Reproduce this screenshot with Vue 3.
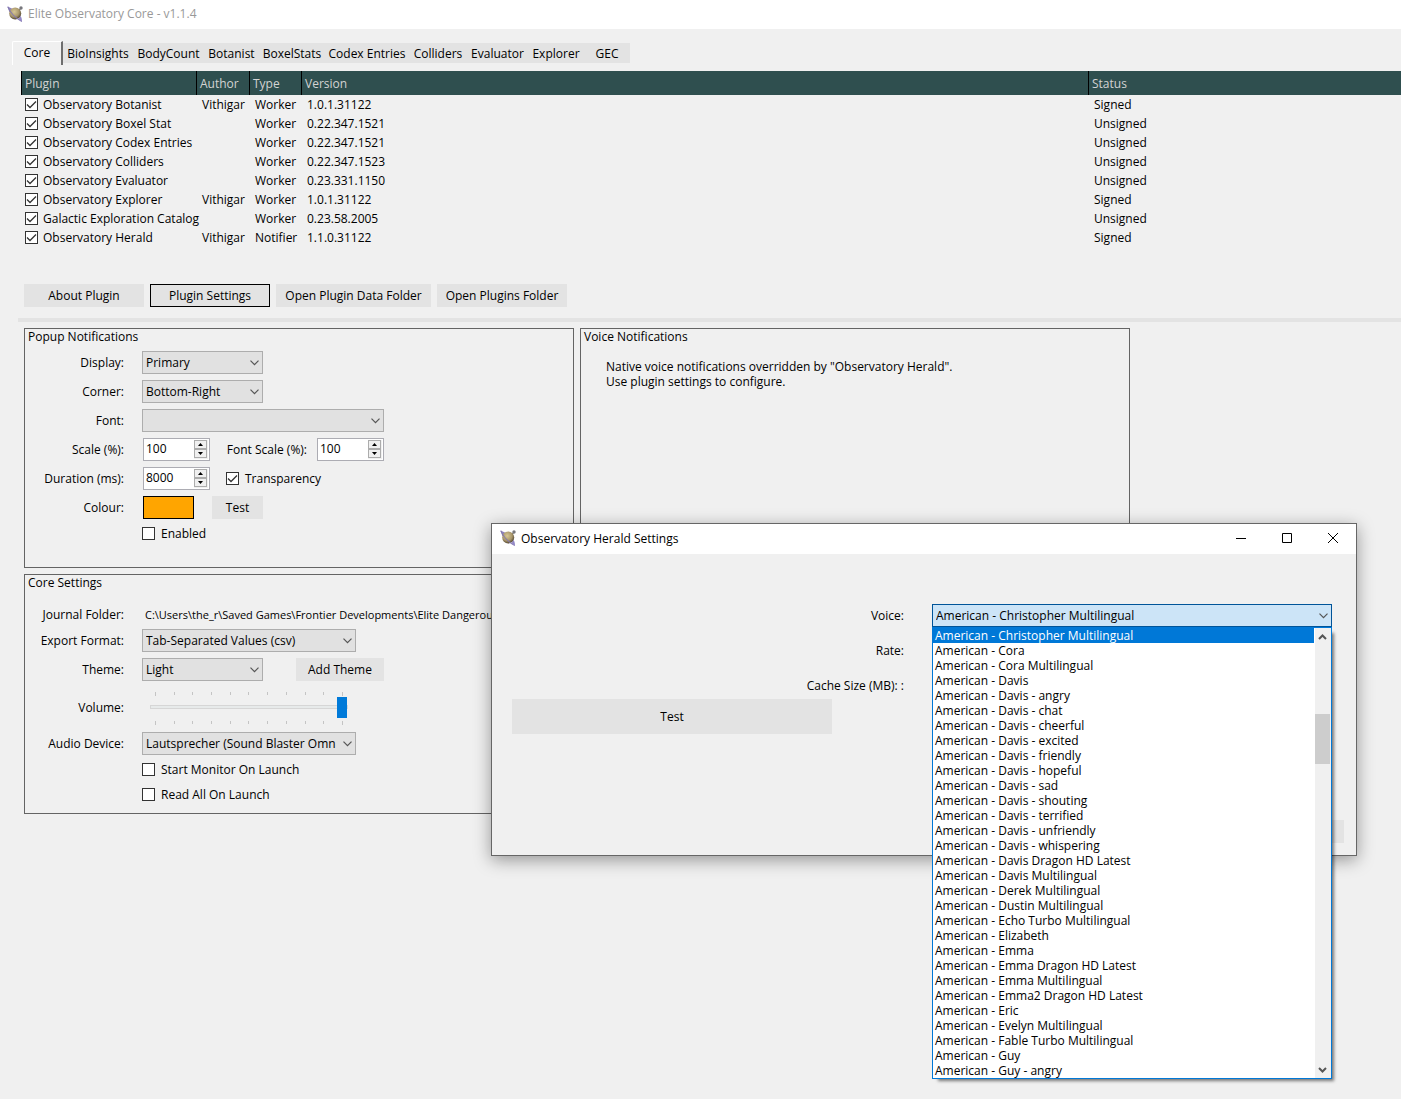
<script setup>
import { ref } from 'vue'

const tabs = ['Core', 'BioInsights', 'BodyCount', 'Botanist', 'BoxelStats', 'Codex Entries', 'Colliders', 'Evaluator', 'Explorer', 'GEC']
const activeTab = ref('Core')

const plugins = ref([
  { name: 'Observatory Botanist', author: 'Vithigar', type: 'Worker', version: '1.0.1.31122', status: 'Signed', on: true },
  { name: 'Observatory Boxel Stat', author: '', type: 'Worker', version: '0.22.347.1521', status: 'Unsigned', on: true },
  { name: 'Observatory Codex Entries', author: '', type: 'Worker', version: '0.22.347.1521', status: 'Unsigned', on: true },
  { name: 'Observatory Colliders', author: '', type: 'Worker', version: '0.22.347.1523', status: 'Unsigned', on: true },
  { name: 'Observatory Evaluator', author: '', type: 'Worker', version: '0.23.331.1150', status: 'Unsigned', on: true },
  { name: 'Observatory Explorer', author: 'Vithigar', type: 'Worker', version: '1.0.1.31122', status: 'Signed', on: true },
  { name: 'Galactic Exploration Catalog', author: '', type: 'Worker', version: '0.23.58.2005', status: 'Unsigned', on: true },
  { name: 'Observatory Herald', author: 'Vithigar', type: 'Notifier', version: '1.1.0.31122', status: 'Signed', on: true }
])

const scale = ref(100)
const fontScale = ref(100)
const duration = ref(8000)
const transparency = ref(true)
const enabled = ref(false)
const startMonitor = ref(false)
const readAll = ref(false)
const volume = ref(100)

const voices = [
  'Christopher Multilingual', 'Cora', 'Cora Multilingual', 'Davis', 'Davis - angry', 'Davis - chat',
  'Davis - cheerful', 'Davis - excited', 'Davis - friendly', 'Davis - hopeful', 'Davis - sad',
  'Davis - shouting', 'Davis - terrified', 'Davis - unfriendly', 'Davis - whispering',
  'Davis Dragon HD Latest', 'Davis Multilingual', 'Derek Multilingual', 'Dustin Multilingual',
  'Echo Turbo Multilingual', 'Elizabeth', 'Emma', 'Emma Dragon HD Latest', 'Emma Multilingual',
  'Emma2 Dragon HD Latest', 'Eric', 'Evelyn Multilingual', 'Fable Turbo Multilingual', 'Guy', 'Guy - angry'
].map((name) => 'American - ' + name)
const voice = ref(voices[0])
</script>

<template>
  <div class="app">
    <svg class="defs" aria-hidden="true">
      <defs>
        <radialGradient id="planetFill" cx="42%" cy="35%" r="68%">
          <stop offset="0" stop-color="#d8c795" />
          <stop offset="0.6" stop-color="#a8966a" />
          <stop offset="1" stop-color="#453a2a" />
        </radialGradient>
      </defs>
      <symbol id="planet" viewBox="0 0 16 16">
        <path d="M0.5 0.5 2.5 6.5 5.5 2.8z" fill="#8d83bd" />
        <path d="M13.2 3 11 5.5" stroke="#8f8f98" stroke-width="1.6" />
        <circle cx="14" cy="2" r="1.7" fill="#77777c" />
        <circle cx="8.2" cy="7.6" r="6" fill="url(#planetFill)" />
        <path d="M0.8 0.8C3 6.5 9 12.5 14.8 15.4" fill="none" stroke="#8378b0" stroke-width="1.1" />
        <path d="M14.8 15.6C15.2 13.8 14.6 11.6 13.6 10L11.4 13.2z" fill="#9388c6" />
      </symbol>
      <symbol id="chevron" viewBox="0 0 9 6">
        <path d="M0.5 0.7 4.5 4.7 8.5 0.7" fill="none" stroke="#555" stroke-width="1.2" />
      </symbol>
      <symbol id="arrow" viewBox="0 0 5 3">
        <path d="M0 3 2.5 0 5 3z" fill="#000" />
      </symbol>
    </svg>

    <header class="titlebar">
      <svg class="planet"><use href="#planet" /></svg>
      <h1>Elite Observatory Core - v1.1.4</h1>
    </header>

    <nav class="tabs" role="tablist">
      <button v-for="tab in tabs" :key="tab" role="tab" :aria-selected="tab === activeTab"
              :class="{ active: tab === activeTab }" @click="activeTab = tab">{{ tab }}</button>
    </nav>

    <main>
      <table class="plugins">
        <colgroup>
          <col class="c-plugin"><col class="c-author"><col class="c-type"><col><col class="c-status">
        </colgroup>
        <thead>
          <tr><th>Plugin</th><th>Author</th><th>Type</th><th>Version</th><th>Status</th></tr>
        </thead>
        <tbody>
          <tr v-for="plugin in plugins" :key="plugin.name">
            <td><label class="check"><input v-model="plugin.on" type="checkbox">{{ plugin.name }}</label></td>
            <td>{{ plugin.author }}</td>
            <td>{{ plugin.type }}</td>
            <td>{{ plugin.version }}</td>
            <td>{{ plugin.status }}</td>
          </tr>
        </tbody>
      </table>

      <div class="actions">
        <button class="btn w120">About Plugin</button>
        <button class="btn w120 focused">Plugin Settings</button>
        <button class="btn w155">Open Plugin Data Folder</button>
        <button class="btn w130">Open Plugins Folder</button>
      </div>

      <div class="splitter"></div>

      <div class="groups">
        <section class="group popup">
          <h2>Popup Notifications</h2>
          <div class="row">
            <label for="display">Display:</label>
            <div class="field">
              <span class="combo small">
                <select id="display"><option>Primary</option></select>
                <svg class="chev"><use href="#chevron" /></svg>
              </span>
            </div>
          </div>
          <div class="row">
            <label for="corner">Corner:</label>
            <div class="field">
              <span class="combo small">
                <select id="corner"><option>Bottom-Right</option></select>
                <svg class="chev"><use href="#chevron" /></svg>
              </span>
            </div>
          </div>
          <div class="row">
            <label for="font">Font:</label>
            <div class="field">
              <span class="combo wide">
                <select id="font"></select>
                <svg class="chev"><use href="#chevron" /></svg>
              </span>
            </div>
          </div>
          <div class="row">
            <label for="scale">Scale (%):</label>
            <div class="field inset">
              <span class="spin">
                <input id="scale" v-model="scale" type="number">
                <span class="steps">
                  <button aria-label="Increase" @click="scale++"><svg><use href="#arrow" /></svg></button>
                  <button aria-label="Decrease" @click="scale--"><svg class="down"><use href="#arrow" /></svg></button>
                </span>
              </span>
              <label class="inner-label" for="font-scale">Font Scale (%):</label>
              <span class="spin">
                <input id="font-scale" v-model="fontScale" type="number">
                <span class="steps">
                  <button aria-label="Increase" @click="fontScale++"><svg><use href="#arrow" /></svg></button>
                  <button aria-label="Decrease" @click="fontScale--"><svg class="down"><use href="#arrow" /></svg></button>
                </span>
              </span>
            </div>
          </div>
          <div class="row">
            <label for="duration">Duration (ms):</label>
            <div class="field inset gap16">
              <span class="spin">
                <input id="duration" v-model="duration" type="number">
                <span class="steps">
                  <button aria-label="Increase" @click="duration++"><svg><use href="#arrow" /></svg></button>
                  <button aria-label="Decrease" @click="duration--"><svg class="down"><use href="#arrow" /></svg></button>
                </span>
              </span>
              <label class="check"><input v-model="transparency" type="checkbox">Transparency</label>
            </div>
          </div>
          <div class="row">
            <label for="colour">Colour:</label>
            <div class="field inset gap18">
              <button id="colour" class="swatch"></button>
              <button class="btn w51">Test</button>
            </div>
          </div>
          <div class="row tick">
            <label class="check"><input v-model="enabled" type="checkbox">Enabled</label>
          </div>
        </section>

        <section class="group">
          <h2>Voice Notifications</h2>
          <p class="note">Native voice notifications overridden by "Observatory Herald".<br>Use plugin settings to configure.</p>
        </section>

        <section class="group core">
          <h2>Core Settings</h2>
          <div class="row short">
            <span>Journal Folder:</span>
            <span class="path">C:\Users\the_r\Saved Games\Frontier Developments\Elite Dangerous</span>
          </div>
          <div class="row">
            <label for="export">Export Format:</label>
            <div class="field">
              <span class="combo medium">
                <select id="export"><option>Tab-Separated Values (csv)</option></select>
                <svg class="chev"><use href="#chevron" /></svg>
              </span>
            </div>
          </div>
          <div class="row">
            <label for="theme">Theme:</label>
            <div class="field gap33">
              <span class="combo small">
                <select id="theme"><option>Light</option></select>
                <svg class="chev"><use href="#chevron" /></svg>
              </span>
              <button class="btn w88">Add Theme</button>
            </div>
          </div>
          <div class="row tall">
            <label for="volume">Volume:</label>
            <div class="slider">
              <div class="ticks"><i v-for="n in 11" :key="n"></i></div>
              <input id="volume" v-model="volume" type="range" min="0" max="100">
              <div class="ticks"><i v-for="n in 11" :key="n"></i></div>
            </div>
          </div>
          <div class="row">
            <label for="audio">Audio Device:</label>
            <div class="field">
              <span class="combo medium">
                <select id="audio"><option>Lautsprecher (Sound Blaster Omn</option></select>
                <svg class="chev"><use href="#chevron" /></svg>
              </span>
            </div>
          </div>
          <div class="row tick">
            <label class="check"><input v-model="startMonitor" type="checkbox">Start Monitor On Launch</label>
          </div>
          <div class="row tick">
            <label class="check"><input v-model="readAll" type="checkbox">Read All On Launch</label>
          </div>
        </section>
      </div>
    </main>

    <div class="dialog" role="dialog" aria-labelledby="dialog-title">
      <header class="dialog-bar">
        <svg class="planet"><use href="#planet" /></svg>
        <h2 id="dialog-title">Observatory Herald Settings</h2>
        <button aria-label="Minimize"><svg viewBox="0 0 10 10"><path d="M0 5.5H10" /></svg></button>
        <button aria-label="Maximize"><svg viewBox="0 0 10 10"><path d="M0.5 0.5H9.5V9.5H0.5z" /></svg></button>
        <button aria-label="Close"><svg viewBox="0 0 10 10"><path d="M0 0 10 10M10 0 0 10" /></svg></button>
      </header>
      <div class="dialog-body">
        <div class="dialog-row">
          <label for="voice">Voice:</label>
          <div class="voice">
            <span class="combo open">
              <select id="voice" v-model="voice"><option v-for="v in voices" :key="v">{{ v }}</option></select>
              <svg class="chev"><use href="#chevron" /></svg>
            </span>
            <div class="dropdown">
              <ul role="listbox" aria-label="Voice">
                <li v-for="v in voices" :key="v" role="option" :aria-selected="v === voice"
                    :class="{ selected: v === voice }" @click="voice = v">{{ v }}</li>
              </ul>
              <div class="scrollbar">
                <svg viewBox="0 0 9 6"><path d="M1 5 4.5 1.5 8 5" /></svg>
                <div class="thumb"></div>
                <svg viewBox="0 0 9 6"><path d="M1 1 4.5 4.5 8 1" /></svg>
              </div>
            </div>
          </div>
        </div>
        <div class="dialog-row"><span>Rate:</span></div>
        <div class="dialog-row"><span>Cache Size (MB): :</span></div>
        <button class="btn test">Test</button>
        <button class="btn close" aria-label="Close"></button>
      </div>
    </div>
  </div>
</template>

<style>
body {
  margin: 0;
  background: #f0f0f0;
}
</style>

<style scoped>
.app {
  position: relative;
  min-height: 100vh;
  overflow: hidden;
  background: #f0f0f0;
  color: #000;
  font: 12px/15px "Open Sans", "Noto Sans", sans-serif;
}
.app *, .app *::before { box-sizing: border-box; }
.defs { position: absolute; width: 0; height: 0; }
h1, h2, p, ul { margin: 0; padding: 0; font: inherit; }
button, input, select { margin: 0; font: inherit; color: inherit; border-radius: 0; }
.planet { width: 16px; height: 16px; flex: none; }

.titlebar {
  display: flex;
  align-items: center;
  gap: 5px;
  height: 29px;
  padding: 0 7px 2px;
  background: #fff;
  color: #999;
}

.tabs {
  display: grid;
  grid-template-columns: 51px 70px 71px 55px 66px 84px 58px 61px 56px 46px;
  align-items: center;
  height: 24px;
  margin: 12px 0 0 12px;
}
.tabs button {
  height: 20px;
  padding: 2px 0 0;
  border: 0;
  background: #e3e3e3;
  line-height: 18px;
  white-space: nowrap;
}
.tabs .active {
  height: 24px;
  padding: 0 0 2px;
  border: solid #fff;
  border-width: 1px 0 0 1px;
  border-right: 2px solid #6e6e6e;
  border-radius: 2px 0 0;
  background: #f0f0f0;
}

main { padding-top: 6px; }
.plugins {
  width: calc(100% - 21px);
  margin-left: 21px;
  table-layout: fixed;
  border-collapse: collapse;
}
.c-plugin { width: 175px; }
.c-author { width: 53px; }
.c-type { width: 52px; }
.c-status { width: 313px; }
th {
  height: 24px;
  padding: 0 4px;
  background: #2f4f4f;
  box-shadow: inset 1px 0 #000;
  color: #d3d3d3;
  font-weight: normal;
  text-align: left;
}
td { height: 19px; padding: 0 0 0 6px; white-space: nowrap; }
td:first-child { padding-left: 4px; }

.check { display: inline-flex; align-items: center; gap: 6px; white-space: nowrap; }
td .check { display: flex; gap: 5px; }
.check input {
  appearance: none;
  flex: none;
  width: 13px;
  height: 13px;
  border: 1px solid #333;
  background: #fff;
}
.check input:checked {
  background: #fff url("data:image/svg+xml,%3Csvg xmlns='http://www.w3.org/2000/svg' viewBox='0 0 11 11'%3E%3Cpath d='M1 5.5 4 8.5 10 2.5' fill='none' stroke='%23333' stroke-width='1.3'/%3E%3C/svg%3E") center / 11px 11px no-repeat;
}

.actions { display: flex; gap: 6px; margin: 37px 0 0 24px; }
.btn {
  height: 23px;
  padding: 0;
  border: 0;
  background: #e3e3e3;
  white-space: nowrap;
}
.focused { border: 1px solid #000; }
.w51 { width: 51px; }
.w88 { width: 88px; }
.w120 { width: 120px; }
.w130 { width: 130px; }
.w155 { width: 155px; }
.splitter { height: 4px; margin: 11px 0 6px 18px; background: #e3e3e3; }

.groups {
  display: grid;
  grid-template-columns: 550px 550px;
  grid-auto-rows: 240px;
  gap: 6px;
  margin-left: 24px;
}
.group {
  display: flex;
  flex-direction: column;
  gap: 6px;
  border: 1px solid #646464;
}
.group h2 { padding-left: 3px; line-height: 16px; }
.core h2 { margin-bottom: 9px; }
.note { padding: 8px 0 0 25px; }

.row {
  display: grid;
  grid-template-columns: 99px 1fr;
  column-gap: 18px;
  align-items: center;
  height: 23px;
  white-space: nowrap;
}
.row > :first-child { text-align: right; }
.short { height: 17px; }
.tall { height: 39px; }
.tick { height: 17px; }
.tick + .tick { margin-top: 2px; }
.tick > .check { grid-column: 2; text-align: left; }
.path { padding-left: 3px; font-size: 11px; }
.field { display: flex; align-items: center; height: 23px; }
.inset { padding-left: 1px; }
.gap16 { gap: 16px; }
.gap18 { gap: 18px; }
.gap33 { gap: 33px; }
.inner-label { width: 97px; margin-right: 10px; text-align: right; }

.combo { position: relative; display: block; height: 23px; }
.combo select {
  appearance: none;
  display: block;
  width: 100%;
  height: 23px;
  padding: 0 18px 0 3px;
  border: 1px solid #adadad;
  background: #e1e1e1;
}
.chev {
  position: absolute;
  top: 9px;
  right: 4px;
  width: 9px;
  height: 6px;
  pointer-events: none;
}
.small { width: 121px; }
.medium { width: 214px; }
.wide { width: 242px; }
.open select { border-color: #005499; background: #cce4f7; }

.spin {
  display: flex;
  width: 67px;
  height: 23px;
  padding: 1px;
  border: 1px solid #acacb3;
  background: #fff;
}
.spin input {
  appearance: textfield;
  width: 49px;
  height: 16px;
  padding: 0 0 0 1px;
  border: 0;
  background: none;
  outline: 0;
}
.spin input::-webkit-inner-spin-button { appearance: none; }
.steps { display: flex; flex-direction: column; flex: 1; background: #f0f0f0; }
.steps button {
  display: grid;
  place-items: center;
  height: 9px;
  margin-right: 1px;
  padding: 0;
  border: 1px solid #acacac;
  background: #f0f0f0;
}
.steps svg { width: 5px; height: 3px; }
.steps .down { transform: rotate(180deg); }
.swatch { width: 51px; height: 23px; border: 1px solid #000; background: #ffa500; }

.slider { width: 214px; padding: 5px 8px 2px; }
.ticks { display: flex; justify-content: space-between; width: 188px; height: 4px; margin-left: 5px; }
.ticks i { width: 1px; height: 3px; background: #c4c4c4; }
.ticks i:first-child, .ticks i:last-child { height: 4px; }
.slider input {
  appearance: none;
  display: block;
  width: 198px;
  height: 23px;
  margin: 0 0 2px;
  padding-right: 1px;
  background:
    linear-gradient(#e7eaea, #e7eaea) 1px 10px / 196px 2px no-repeat,
    linear-gradient(#d6d6d6, #d6d6d6) 0 9px / 100% 4px no-repeat;
}
.slider input::-webkit-slider-thumb {
  appearance: none;
  width: 10px;
  height: 21px;
  background: #007ad9;
}

.dialog {
  position: absolute;
  top: 523px;
  left: 491px;
  width: 866px;
  border: 1px solid #666;
  background: #f0f0f0;
  box-shadow: 0 4px 16px rgba(0, 0, 0, 0.38);
}
.dialog-bar {
  display: flex;
  align-items: center;
  height: 30px;
  padding: 0 0 2px 8px;
  background: #fff;
}
.dialog-bar h2 { flex: 1; padding-left: 5px; }
.dialog-bar button {
  display: grid;
  place-items: center;
  width: 46px;
  height: 28px;
  padding: 0;
  border: 0;
  background: none;
}
.dialog-bar button svg { width: 10px; height: 10px; fill: none; stroke: #000; }
.dialog-body {
  display: flex;
  flex-direction: column;
  gap: 12px;
  height: 301px;
  padding: 50px 12px 12px 20px;
}
.dialog-row {
  display: grid;
  grid-template-columns: 392px 400px;
  column-gap: 28px;
  align-items: center;
  height: 23px;
}
.dialog-row > :first-child { text-align: right; }
.test { width: 320px; height: 35px; margin-top: -10px; flex: none; }
.close { width: 75px; margin: auto 0 0 auto; flex: none; }

.voice { position: relative; }
.dropdown {
  position: absolute;
  top: 23px;
  left: 0;
  z-index: 1;
  display: flex;
  width: 400px;
  border: 1px solid #0078d7;
  background: #fff;
  box-shadow: 4px 4px 3px -2px rgba(0, 0, 0, 0.5);
}
.dropdown ul { flex: 1; list-style: none; }
.dropdown li { height: 15px; padding-left: 2px; line-height: 15px; white-space: nowrap; }
.selected { background: #0078d7; color: #fff; }
.scrollbar {
  display: flex;
  flex-direction: column;
  align-items: center;
  width: 17px;
  padding: 6px 1px 5px 0;
  border-left: 1px solid #fff;
  background: #f0f0f0;
}
.scrollbar svg { width: 9px; height: 6px; fill: none; stroke: #555; stroke-width: 2; }
.thumb { width: 15px; height: 50px; margin: 74px 0 auto; background: #cdcdcd; }
</style>
